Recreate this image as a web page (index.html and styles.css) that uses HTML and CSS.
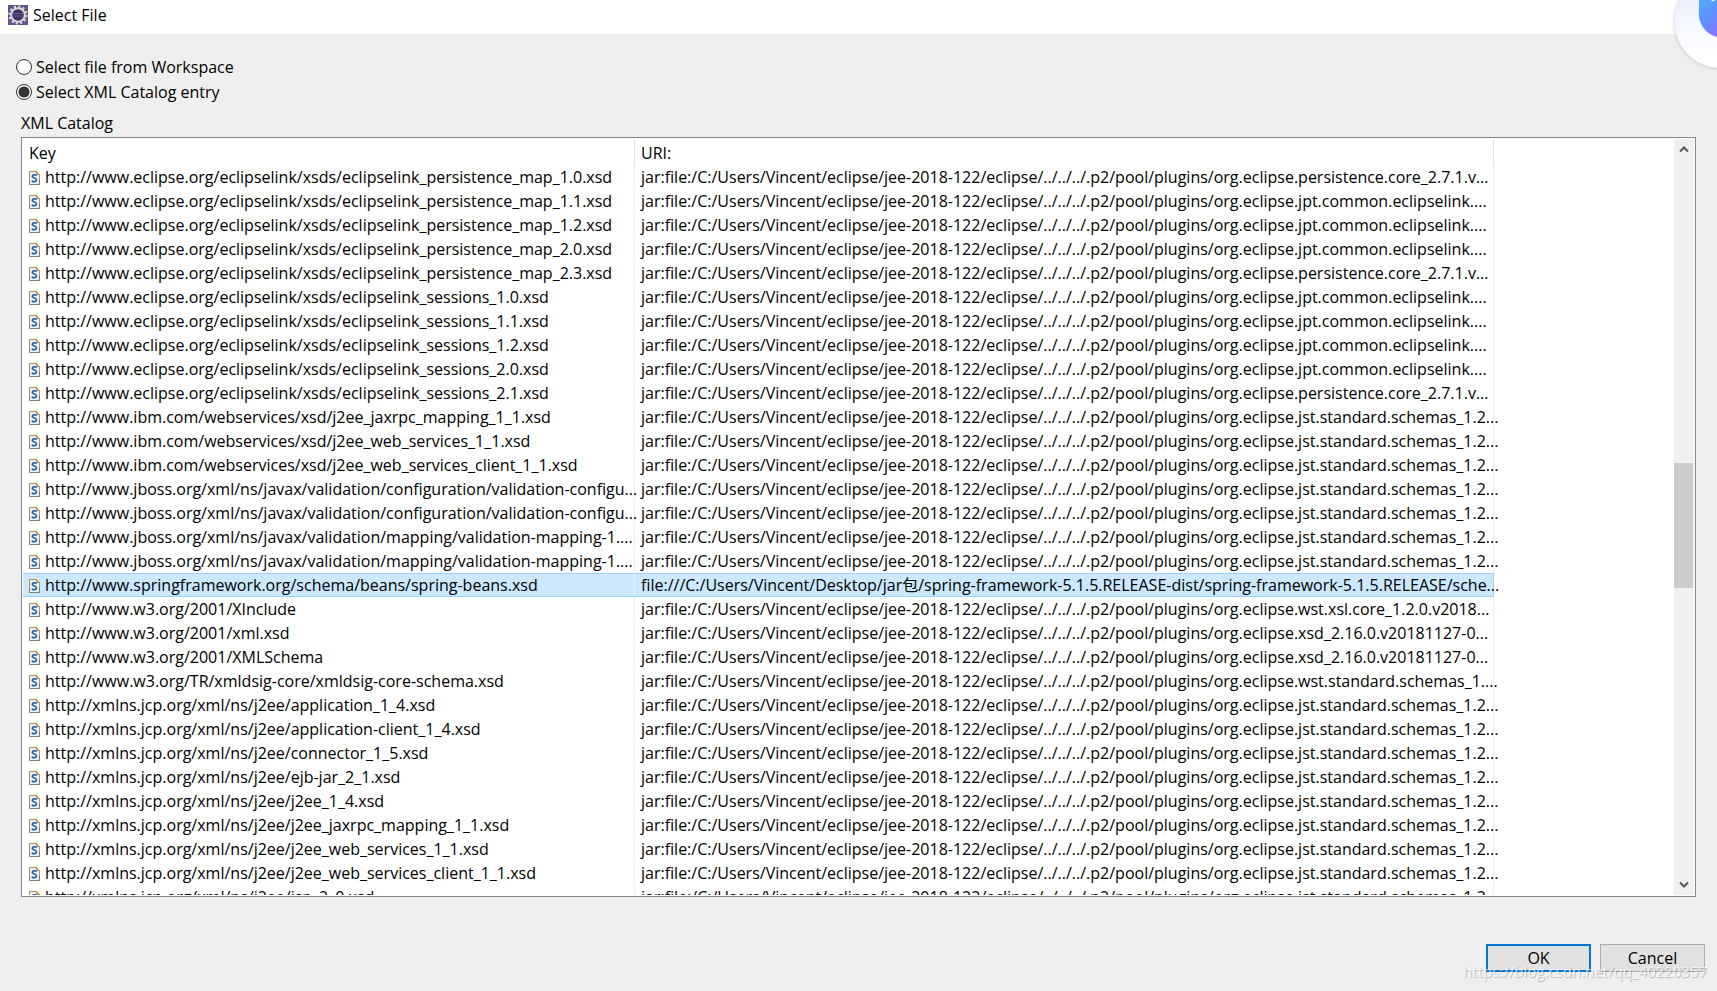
FILE: index.html
```
<!DOCTYPE html>
<html lang="en">
<head>
<meta charset="utf-8">
<title>Select File</title>
<link rel="stylesheet" href="styles.css">
</head>
<body>
<svg class="defs" aria-hidden="true">
  <symbol id="xsd" viewBox="0 0 11 14">
    <path d="M.5.5h7l3 3v10H.5z" fill="#e6f1fb" stroke="#7f7c6a"/>
    <path d="M.5 9V.5h7l3 3V9" fill="none" stroke="#b8924a"/>
    <path d="M7.5.5v3h3z" fill="#f2d58c" stroke="#b8924a"/>
    <path d="M7.6 4.6C6.5 3.3 3.3 3.500 3.300 5.300 3.300 7.300 7.500 6.600 7.500 9 7.500 11 4.200 11.200 2.900 9.800" fill="none" stroke="#2a62a6" stroke-width="1.700"/>
  </symbol>
</svg>
<header class="titlebar">
  <svg class="app-icon" viewBox="0 0 20 20" aria-hidden="true">
    <rect width="20" height="20" fill="#64518c"/>
    <circle cx="10" cy="10" r="8.400" fill="none" stroke="#d9d6d2" stroke-width="2.400" stroke-dasharray="2.200 2.198"/>
    <circle cx="10" cy="10" r="6.800" fill="#3d3263" stroke="#d9d6d2" stroke-width="2"/>
    <path d="M5 8.500h10M4.500 11h11" stroke="#6c5c9c"/>
  </svg>
  <h1 class="title">Select File</h1>
</header>
<main class="content">
  <label class="option"><input class="radio" type="radio" name="source">Select file from Workspace</label>
  <label class="option"><input class="radio" type="radio" name="source" checked>Select XML Catalog entry</label>
  <h2 class="caption" id="caption">XML Catalog</h2>
  <div class="catalog">
    <div class="viewport">
      <table class="entries" aria-labelledby="caption">
        <colgroup><col class="col-key"><col class="col-uri"></colgroup>
        <thead><tr><th>Key</th><th>URI:</th></tr></thead>
        <tbody id="rows"></tbody>
      </table>
    </div>
    <div class="scrollbar">
      <button class="arrow" aria-label="Scroll up"><svg viewBox="0 0 10 8"><path d="M1 6.500l4-4 4 4"/></svg></button>
      <div class="track"><div class="thumb"></div></div>
      <button class="arrow" aria-label="Scroll down"><svg viewBox="0 0 10 8"><path d="M1 1.500l4 4 4-4"/></svg></button>
    </div>
  </div>
</main>
<footer class="actions">
  <button class="btn btn-default">OK</button>
  <button class="btn">Cancel</button>
  <span class="watermark">https://blog.csdn.net/qq_40220357</span>
</footer>
<div class="floating">
  <svg viewBox="0 0 92 92" aria-hidden="true">
    <defs><linearGradient id="bird" x1="0" y1="0" x2="1" y2="1"><stop offset="0" stop-color="#4db2ff"/><stop offset=".4" stop-color="#5f90ff"/><stop offset=".75" stop-color="#9070ff"/></linearGradient></defs>
    <path d="M21 18c5 6 3 10 3 18 0 14 10 25 23 25s23-11 23-25V20H42c-1 3-3 6-5 4l-3-6z" fill="url(#bird)"/>
  </svg>
</div>
<script src="rows.js"></script>
</body>
</html>
```
FILE: styles.css
```
* { box-sizing: border-box; }
body {
  margin: 0;
  height: 100vh;
  display: flex;
  flex-direction: column;
  overflow: hidden;
  background: #efefef;
  color: #000;
  font-family: "Open Sans", "Noto Sans CJK SC", sans-serif;
  font-size: 16px;
  line-height: 24px;
}
.defs { display: none; }
.titlebar {
  display: flex;
  align-items: center;
  gap: 5px;
  height: 34px;
  padding: 0 8px 4px;
  background: #fff;
}
.app-icon { width: 20px; height: 20px; }
.title, .caption { margin: 0; font-size: 16px; font-weight: 400; }
.content {
  flex: 1;
  min-height: 0;
  display: flex;
  flex-direction: column;
  padding: 20px 21px 0;
}
.option {
  display: flex;
  align-items: center;
  gap: 4px;
  height: 25px;
  margin-left: -5px;
}
.radio {
  appearance: none;
  width: 16px;
  height: 16px;
  margin: 0;
  border: 1px solid #333;
  border-radius: 50%;
  background: #fff;
}
.radio:checked { background: radial-gradient(circle, #333 0 5px, #fff 6px); }
.caption { margin: 7px 0 2px; }
.catalog {
  flex: 1;
  min-height: 0;
  display: flex;
  padding: 1px;
  border: 1px solid #828790;
  background: #fff;
}
.viewport { flex: 1; overflow: hidden; }
.entries {
  width: 1471px;
  table-layout: fixed;
  border-collapse: separate;
  border-spacing: 0;
}
.col-key { width: 612px; }
.entries th, .entries td {
  padding: 1px 0 0 6px;
  border-right: 1px solid #e5f0fb;
  text-align: left;
  font-weight: 400;
  white-space: nowrap;
}
.entries th { height: 26px; border-right-color: #e3e3e3; }
.entries td { height: 24px; line-height: 21px; }
.entry { display: flex; align-items: center; gap: 5px; }
.entry svg { width: 11px; height: 14px; flex: none; }
.selected td {
  background: #cce8ff;
  border-top: 1px solid #99d1ff;
  border-bottom: 1px solid #99d1ff;
}
.selected td:last-child { border-right-color: #99d1ff; }
.scrollbar {
  display: flex;
  flex-direction: column;
  width: 20px;
  background: #f0f0f0;
}
.arrow { height: 20px; padding: 0; border: 0; background: none; display: grid; place-items: center; }
.arrow svg { width: 10px; height: 8px; fill: none; stroke: #555; stroke-width: 2; }
.track { flex: 1; padding-right: 1px; display: grid; grid-template-rows: 304fr 125fr 287fr; }
.thumb { grid-row: 2; background: #cdcdcd; }
.actions {
  position: relative;
  display: flex;
  justify-content: flex-end;
  gap: 9px;
  padding: 47px 12px 19px;
}
.btn {
  width: 105px;
  height: 28px;
  padding: 0;
  border: 1px solid #adadad;
  background: #e1e1e1;
  color: #000;
  font: inherit;
}
.btn-default { border: 2px solid #0078d7; }
.watermark {
  position: absolute;
  right: 10px;
  bottom: 8px;
  font-size: 15px;
  color: rgba(255, 255, 255, .7);
  text-shadow: 1px 1px 1px rgba(0, 0, 0, .25);
}
.floating {
  position: absolute;
  top: -23px;
  right: -49px;
  width: 91px;
  height: 91px;
  border-radius: 50%;
  background: linear-gradient(#e4ebff, #fff 85%);
  box-shadow: 0 0 4px rgba(60, 60, 100, .3);
}
```
FILE: rows.js
```
const base = "jar:file:/C:/Users/Vincent/eclipse/jee-2018-122/eclipse/../../../.p2/pool/plugins/org.eclipse.";
const core = base + "persistence.core_2.7.1.v...";
const jpt = base + "jpt.common.eclipselink....";
const jst = base + "jst.standard.schemas_1.2...";
const link = "http://www.eclipse.org/eclipselink/xsds/eclipselink_";
const ibm = "http://www.ibm.com/webservices/xsd/";
const jboss = "http://www.jboss.org/xml/ns/javax/validation/";
const w3 = "http://www.w3.org/";
const j2ee = "http://xmlns.jcp.org/xml/ns/j2ee/";
const entries = [
  [link + "persistence_map_1.0.xsd", core],
  [link + "persistence_map_1.1.xsd", jpt],
  [link + "persistence_map_1.2.xsd", jpt],
  [link + "persistence_map_2.0.xsd", jpt],
  [link + "persistence_map_2.3.xsd", core],
  [link + "sessions_1.0.xsd", jpt],
  [link + "sessions_1.1.xsd", jpt],
  [link + "sessions_1.2.xsd", jpt],
  [link + "sessions_2.0.xsd", jpt],
  [link + "sessions_2.1.xsd", core],
  [ibm + "j2ee_jaxrpc_mapping_1_1.xsd", jst],
  [ibm + "j2ee_web_services_1_1.xsd", jst],
  [ibm + "j2ee_web_services_client_1_1.xsd", jst],
  [jboss + "configuration/validation-configu...", jst],
  [jboss + "configuration/validation-configu...", jst],
  [jboss + "mapping/validation-mapping-1....", jst],
  [jboss + "mapping/validation-mapping-1....", jst],
  ["http://www.springframework.org/schema/beans/spring-beans.xsd", "file:///C:/Users/Vincent/Desktop/jar包/spring-framework-5.1.5.RELEASE-dist/spring-framework-5.1.5.RELEASE/sche...", true],
  [w3 + "2001/XInclude", base + "wst.xsl.core_1.2.0.v2018..."],
  [w3 + "2001/xml.xsd", base + "xsd_2.16.0.v20181127-0..."],
  [w3 + "2001/XMLSchema", base + "xsd_2.16.0.v20181127-0..."],
  [w3 + "TR/xmldsig-core/xmldsig-core-schema.xsd", base + "wst.standard.schemas_1...."],
  [j2ee + "application_1_4.xsd", jst],
  [j2ee + "application-client_1_4.xsd", jst],
  [j2ee + "connector_1_5.xsd", jst],
  [j2ee + "ejb-jar_2_1.xsd", jst],
  [j2ee + "j2ee_1_4.xsd", jst],
  [j2ee + "j2ee_jaxrpc_mapping_1_1.xsd", jst],
  [j2ee + "j2ee_web_services_1_1.xsd", jst],
  [j2ee + "j2ee_web_services_client_1_1.xsd", jst],
  [j2ee + "jsp_2_0.xsd", jst],
];
document.getElementById("rows").innerHTML = entries.map(([key, uri, selected]) =>
  `<tr${selected ? ' class="selected"' : ""}><td><div class="entry"><svg><use href="#xsd"/></svg><span>${key}</span></div></td><td>${uri}</td></tr>`
).join("");
```
